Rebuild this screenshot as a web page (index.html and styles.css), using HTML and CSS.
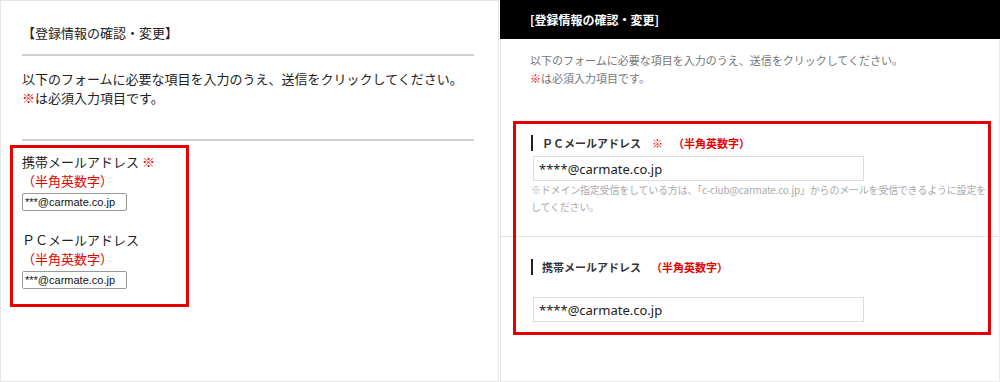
FILE: index.html
```html
<!DOCTYPE html>
<html lang="ja">
<head>
  <meta charset="UTF-8">
  <meta name="viewport" content="width=device-width, initial-scale=1.0">
  <title>登録情報の確認・変更</title>
  <link rel="stylesheet" href="styles.css">
</head>
<body>
  <div class="compare">
    <!-- before -->
    <section class="old-panel">
      <h2 class="old-title">【登録情報の確認・変更】</h2>
      <p class="old-lead">
        以下のフォームに必要な項目を入力のうえ、送信をクリックしてください。<br>
        <span class="req">※</span>は必須入力項目です。
      </p>
      <div class="old-box">
        <div class="old-field">
          <div class="old-label">携帯メールアドレス <span class="req">※</span></div>
          <div class="old-note">（半角英数字）</div>
          <input class="old-input" type="text" value="***@carmate.co.jp">
        </div>
        <div class="old-field">
          <div class="old-label">ＰＣメールアドレス</div>
          <div class="old-note">（半角英数字）</div>
          <input class="old-input" type="text" value="***@carmate.co.jp">
        </div>
      </div>
    </section>

    <!-- after -->
    <section class="new-panel">
      <h2 class="new-title">[登録情報の確認・変更]</h2>
      <p class="new-lead">
        以下のフォームに必要な項目を入力のうえ、送信をクリックしてください。<br>
        <span class="req">※</span>は必須入力項目です。
      </p>
      <div class="new-form">
        <div class="new-row">
          <div class="new-label">ＰＣメールアドレス<span class="new-req">※</span><span class="new-hint">（半角英数字）</span></div>
          <input class="new-input" type="text" value="****@carmate.co.jp">
          <p class="new-help">※ドメイン指定受信をしている方は、「c-club@carmate.co.jp」からのメールを受信できるように設定を<br>してください。</p>
        </div>
        <div class="new-row new-row-mobile">
          <div class="new-label">携帯メールアドレス<span class="new-hint">（半角英数字）</span></div>
          <input class="new-input" type="text" value="****@carmate.co.jp">
        </div>
        <div class="highlight"></div>
      </div>
    </section>
  </div>
</body>
</html>
```

FILE: styles.css
```css
:root {
  --red: #e60000;
  --text-dark: #222222;
  --text-gray: #777777;
  --line: #e4e4e4;
}

* {
  box-sizing: border-box;
  margin: 0;
  padding: 0;
}

body {
  font-family: 'Noto Sans CJK JP', 'Noto Sans', sans-serif;
  color: var(--text-dark);
  background: #ffffff;
}

.compare {
  display: flex;
  width: 1000px;
  height: 382px;
}

.req {
  color: var(--red);
}

/* ---- old design ---- */
.old-panel {
  width: 499px;
  height: 382px;
  border: 1px solid #e6e6e6;
  padding: 22px 24px 0 21px;
}

.old-title {
  font-size: 13px;
  font-weight: 400;
  line-height: 19px;
  padding-bottom: 12px;
  border-bottom: 2px solid #cfcfcf;
}

.old-lead {
  font-size: 13px;
  line-height: 19px;
  padding: 13px 0 32px;
  border-bottom: 2px solid #cfcfcf;
}

.old-box {
  width: 179px;
  margin: 4px 0 0 -12px;
  padding: 4px 0 15px 9px;
  border: 3px solid var(--red);
}

.old-field + .old-field {
  margin-top: 19px;
}

.old-label,
.old-note {
  font-size: 13px;
  line-height: 19px;
}

.old-note {
  color: var(--red);
}

.old-input {
  display: block;
  width: 105px;
  height: 18px;
  margin-top: 3px;
  padding: 0 2px;
  border: 1px solid #9a9a9a;
  border-radius: 2px;
  font-family: 'Liberation Sans', Arial, sans-serif;
  font-size: 11px;
  color: #111111;
}

/* ---- new design ---- */
.new-panel {
  flex: 1;
  height: 382px;
  margin-left: 1px;
  border: 1px solid #ececec;
  border-top: none;
  border-left-color: #e4e4e4;
}

.new-title {
  height: 39px;
  margin: 0 -1px;
  padding-left: 30px;
  background: #000000;
  color: #ffffff;
  font-size: 12px;
  font-weight: 700;
  line-height: 39px;
}

.new-lead {
  font-size: 11px;
  line-height: 18px;
  color: var(--text-gray);
  padding: 12px 0 0 29px;
}

.new-form {
  position: relative;
  margin-top: 34px;
}

.new-row {
  padding: 14px 12px 21px 30px;
  border-bottom: 1px solid var(--line);
}

.new-row-mobile {
  padding-top: 22px;
  border-bottom: none;
}

.new-label {
  height: 16px;
  padding-left: 9px;
  border-left: 2px solid #222222;
  font-size: 11px;
  font-weight: 700;
  line-height: 16px;
  color: #333333;
}

.new-req {
  color: var(--red);
  margin-left: 11px;
}

.new-hint {
  color: var(--red);
  margin-left: 10px;
}

.new-input {
  display: block;
  width: 331px;
  height: 25px;
  margin: 5px 0 0 2px;
  padding: 0 5px;
  border: 1px solid #dddddd;
  font-family: 'Noto Sans', sans-serif;
  font-size: 13px;
  color: #222222;
}

.new-row-mobile .new-input {
  margin-top: 22px;
}

.new-help {
  font-size: 10px;
  line-height: 17px;
  letter-spacing: -0.2px;
  white-space: nowrap;
  color: #aaaaaa;
}

/* red highlight drawn over the form rows */
.highlight {
  position: absolute;
  left: 12px;
  top: 0;
  width: 478px;
  height: 214px;
  border: 3px solid var(--red);
  pointer-events: none;
}
```
